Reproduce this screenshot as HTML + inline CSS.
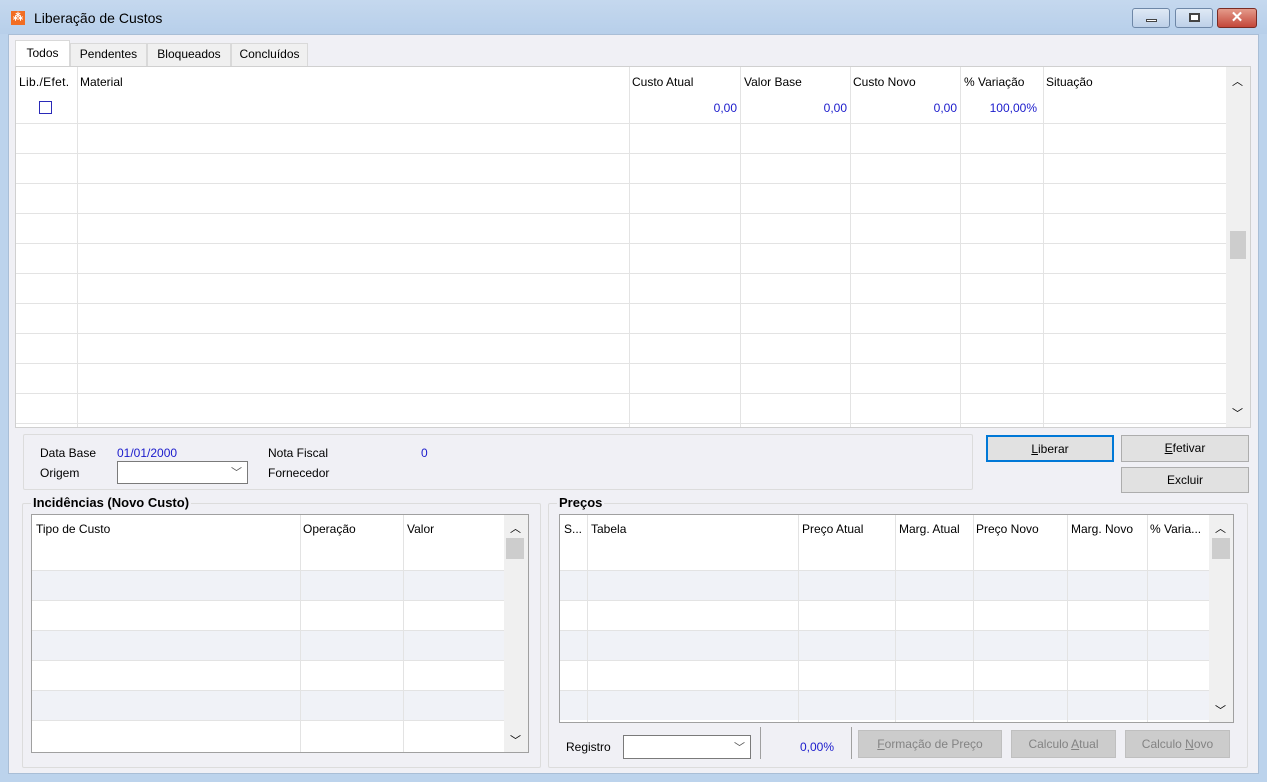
<!DOCTYPE html>
<html><head><meta charset="utf-8"><style>
*{box-sizing:border-box;margin:0;padding:0}
body{width:1267px;height:782px;overflow:hidden;font-family:"Liberation Sans",sans-serif;font-size:12px;color:#000;background:#bcd3ec;position:relative}
.a{position:absolute}
#title{left:0;top:0;width:1267px;height:34px;background:linear-gradient(#c5d8ee,#b7cfea)}
#client{left:8px;top:34px;width:1251px;height:740px;background:#f0f0f5;border:1px solid #a9bed6}
.grid{background:#fff;border:1px solid #a0a0a0;overflow:hidden}
.vl{position:absolute;top:0;bottom:0;width:1px;background:#e3e3e3}
.hl{position:absolute;left:0;height:1px;background:#e3e3e3}
.btn{position:absolute;background:#e1e1e1;border:1px solid #adadad;text-align:center;line-height:24px;font-size:12px}
.dis{background:#ccc;color:#838383;border-color:#bfbfbf}
.sb{position:absolute;top:0;bottom:0;background:#f0f0f0}
.grp{position:absolute;border:1px solid #dcdcdc;border-radius:2px}
.blue{color:#1b1bcc}
</style></head><body>
<div id="title" class="a">
 <div class="a" style="left:11px;top:11px;width:14px;height:14px;background:#f26d22;color:#fff;font-size:10px;line-height:14px;text-align:center;font-weight:bold">⁂</div>
 <div class="a" style="left:34px;top:10px;font-size:14px">Liberação de Custos</div>
 <div class="a" style="left:1132px;top:8px;width:38px;height:20px;border:1px solid #6e87a7;border-radius:3px;background:linear-gradient(#dfe9f5,#bdd0e8)"><div class="a" style="left:13px;top:10px;width:11px;height:3px;background:#fff;border:1px solid #444"></div></div>
 <div class="a" style="left:1175px;top:8px;width:38px;height:20px;border:1px solid #6e87a7;border-radius:3px;background:linear-gradient(#dfe9f5,#bdd0e8)"><div class="a" style="left:13px;top:4px;width:11px;height:9px;background:#fff;border:2px solid #444"></div></div>
 <div class="a" style="left:1217px;top:8px;width:40px;height:20px;border:1px solid #7a2b24;border-radius:3px;background:linear-gradient(#e49b8b,#c4473a);color:#fff;font-weight:bold;font-size:15px;line-height:18px;text-align:center">✕</div>
</div>
<div id="client" class="a"></div>
<div class="a" style="left:15px;top:40px;width:55px;height:27px;background:#fff;border:1px solid #d9d9d9;border-bottom:none;text-align:center;line-height:24px">Todos</div>
<div class="a" style="left:70px;top:43px;width:77px;height:24px;background:#f0f0f0;border:1px solid #d9d9d9;text-align:center;line-height:21px">Pendentes</div>
<div class="a" style="left:147px;top:43px;width:84px;height:24px;background:#f0f0f0;border:1px solid #d9d9d9;text-align:center;line-height:21px">Bloqueados</div>
<div class="a" style="left:231px;top:43px;width:77px;height:24px;background:#f0f0f0;border:1px solid #d9d9d9;text-align:center;line-height:21px">Concluídos</div>
<div class="a grid" style="left:15px;top:66px;width:1236px;height:362px;border-color:#d0d0d0">
 <div class="vl" style="left:61px"></div><div class="vl" style="left:613px"></div><div class="vl" style="left:724px"></div><div class="vl" style="left:834px"></div><div class="vl" style="left:944px"></div><div class="vl" style="left:1027px"></div>
 <div class="hl" style="top:56px;width:1210px"></div><div class="hl" style="top:86px;width:1210px"></div><div class="hl" style="top:116px;width:1210px"></div><div class="hl" style="top:146px;width:1210px"></div><div class="hl" style="top:176px;width:1210px"></div><div class="hl" style="top:206px;width:1210px"></div><div class="hl" style="top:236px;width:1210px"></div><div class="hl" style="top:266px;width:1210px"></div><div class="hl" style="top:296px;width:1210px"></div><div class="hl" style="top:326px;width:1210px"></div><div class="hl" style="top:356px;width:1210px"></div>
 <div class="a" style="left:3px;top:8px;letter-spacing:0.3px">Lib./Efet.</div><div class="a" style="left:64px;top:8px">Material</div>
 <div class="a" style="left:616px;top:8px">Custo Atual</div><div class="a" style="left:728px;top:8px">Valor Base</div><div class="a" style="left:837px;top:8px">Custo Novo</div><div class="a" style="left:948px;top:8px">% Variação</div><div class="a" style="left:1030px;top:8px">Situação</div>
 <div class="a" style="left:23px;top:34px;width:13px;height:13px;border:1px solid #2a2ab8"></div>
 <div class="a blue" style="left:613px;width:108px;top:34px;text-align:right">0,00</div>
 <div class="a blue" style="left:724px;width:107px;top:34px;text-align:right">0,00</div>
 <div class="a blue" style="left:834px;width:107px;top:34px;text-align:right">0,00</div>
 <div class="a blue" style="left:944px;width:77px;top:34px;text-align:right">100,00%</div>
 <div class="sb" style="left:1210px;width:24px"><div class="a" style="left:6px;top:6px;font-size:11px">︿</div><div class="a" style="left:4px;top:164px;width:16px;height:28px;background:#cdcdcd"></div><div class="a" style="left:6px;top:338px;font-size:11px">﹀</div></div>
</div>
<div class="grp" style="left:23px;top:434px;width:950px;height:56px"></div>
<div class="a" style="left:40px;top:446px">Data Base</div><div class="a blue" style="left:117px;top:446px">01/01/2000</div>
<div class="a" style="left:268px;top:446px">Nota Fiscal</div><div class="a blue" style="left:421px;top:446px">0</div>
<div class="a" style="left:40px;top:466px">Origem</div>
<div class="a" style="left:117px;top:461px;width:131px;height:23px;background:#fff;border:1px solid #7a7a7a"><span class="a" style="right:5px;top:2px;font-size:11px;color:#555">﹀</span></div>
<div class="a" style="left:268px;top:466px">Fornecedor</div>
<div class="btn" style="left:986px;top:435px;width:128px;height:27px;border:2px solid #0078d7"><u>L</u>iberar</div>
<div class="btn" style="left:1121px;top:435px;width:128px;height:27px"><u>E</u>fetivar</div>
<div class="btn" style="left:1121px;top:467px;width:128px;height:26px">Excluir</div>
<div class="grp" style="left:22px;top:503px;width:519px;height:265px"></div>
<div class="a" style="left:31px;top:495px;background:#f0f0f5;padding:0 2px;font-weight:bold;font-size:13px">Incidências (Novo Custo)</div>
<div class="a grid" style="left:31px;top:514px;width:498px;height:239px">
 <div class="a" style="left:0;top:55px;width:472px;height:30px;background:#f0f2f7"></div>
 <div class="a" style="left:0;top:115px;width:472px;height:30px;background:#f0f2f7"></div>
 <div class="a" style="left:0;top:175px;width:472px;height:30px;background:#f0f2f7"></div>
 <div class="hl" style="top:55px;width:472px"></div><div class="hl" style="top:85px;width:472px"></div><div class="hl" style="top:115px;width:472px"></div><div class="hl" style="top:145px;width:472px"></div><div class="hl" style="top:175px;width:472px"></div><div class="hl" style="top:205px;width:472px"></div>
 <div class="vl" style="left:268px"></div><div class="vl" style="left:371px"></div>
 <div class="a" style="left:4px;top:7px">Tipo de Custo</div><div class="a" style="left:271px;top:7px">Operação</div><div class="a" style="left:375px;top:7px">Valor</div>
 <div class="sb" style="left:472px;width:25px"><div class="a" style="left:6px;top:5px;font-size:11px">︿</div><div class="a" style="left:2px;top:23px;width:18px;height:21px;background:#cdcdcd"></div><div class="a" style="left:6px;top:217px;font-size:11px">﹀</div></div>
</div>
<div class="grp" style="left:548px;top:503px;width:700px;height:265px"></div>
<div class="a" style="left:557px;top:495px;background:#f0f0f5;padding:0 2px;font-weight:bold;font-size:13px">Preços</div>
<div class="a grid" style="left:559px;top:514px;width:675px;height:209px">
 <div class="a" style="left:0;top:55px;width:649px;height:30px;background:#f0f2f7"></div>
 <div class="a" style="left:0;top:115px;width:649px;height:30px;background:#f0f2f7"></div>
 <div class="a" style="left:0;top:175px;width:649px;height:30px;background:#f0f2f7"></div>
 <div class="hl" style="top:55px;width:649px"></div><div class="hl" style="top:85px;width:649px"></div><div class="hl" style="top:115px;width:649px"></div><div class="hl" style="top:145px;width:649px"></div><div class="hl" style="top:175px;width:649px"></div>
 <div class="vl" style="left:27px"></div><div class="vl" style="left:238px"></div><div class="vl" style="left:335px"></div><div class="vl" style="left:413px"></div><div class="vl" style="left:507px"></div><div class="vl" style="left:587px"></div>
 <div class="a" style="left:4px;top:7px">S...</div><div class="a" style="left:31px;top:7px">Tabela</div><div class="a" style="left:242px;top:7px">Preço Atual</div><div class="a" style="left:339px;top:7px">Marg. Atual</div><div class="a" style="left:416px;top:7px">Preço Novo</div><div class="a" style="left:511px;top:7px">Marg. Novo</div><div class="a" style="left:590px;top:7px">% Varia...</div>
 <div class="sb" style="left:649px;width:25px"><div class="a" style="left:6px;top:5px;font-size:11px">︿</div><div class="a" style="left:3px;top:23px;width:18px;height:21px;background:#cdcdcd"></div><div class="a" style="left:6px;top:187px;font-size:11px">﹀</div></div>
</div>
<div class="a" style="left:566px;top:740px">Registro</div>
<div class="a" style="left:623px;top:735px;width:128px;height:24px;background:#fff;border:1px solid #7a7a7a"><span class="a" style="right:5px;top:3px;font-size:11px;color:#555">﹀</span></div>
<div class="a" style="left:760px;top:727px;width:1px;height:32px;background:#a0a0a0"></div>
<div class="a blue" style="left:800px;top:740px">0,00%</div>
<div class="a" style="left:851px;top:727px;width:1px;height:32px;background:#a0a0a0"></div>
<div class="btn dis" style="left:858px;top:730px;width:144px;height:28px;line-height:26px"><u>F</u>ormação de Preço</div>
<div class="btn dis" style="left:1011px;top:730px;width:105px;height:28px;line-height:26px">Calculo <u>A</u>tual</div>
<div class="btn dis" style="left:1125px;top:730px;width:105px;height:28px;line-height:26px">Calculo <u>N</u>ovo</div>
</body></html>
